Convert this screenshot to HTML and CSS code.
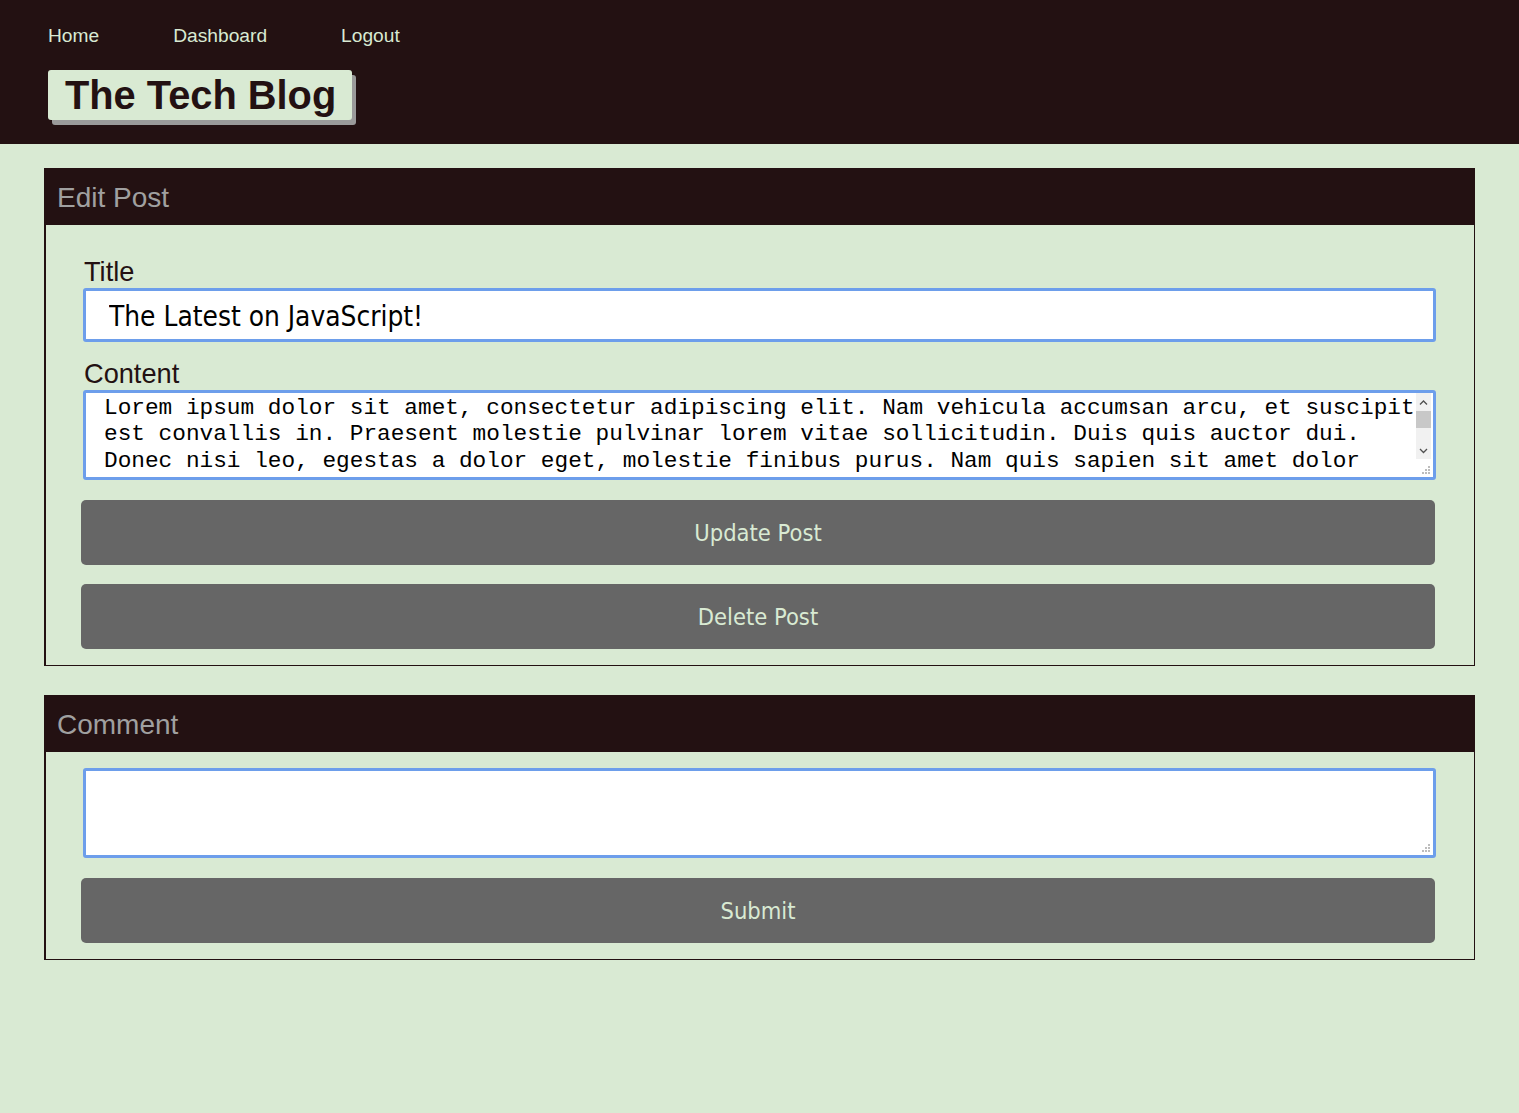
FILE: index.html
```html
<!DOCTYPE html>
<html lang="en">
<head>
<meta charset="utf-8">
<title>The Tech Blog</title>
<link rel="stylesheet" href="styles.css">
</head>
<body>
<header class="site-header">
  <nav class="nav">
    <a class="nav-link" href="#">Home</a>
    <a class="nav-link" href="#">Dashboard</a>
    <a class="nav-link" href="#">Logout</a>
  </nav>
  <h1 class="brand">The Tech Blog</h1>
</header>
<main class="main">
  <section class="card">
    <h2 class="card-title">Edit Post</h2>
    <form class="card-body">
      <label class="field-label" for="title">Title</label>
      <input class="text-input" id="title" type="text" value="The Latest on JavaScript!">
      <label class="field-label" for="content">Content</label>
      <div class="area-wrap">
        <textarea class="text-area content-area" id="content">Lorem ipsum dolor sit amet, consectetur adipiscing elit. Nam vehicula accumsan arcu, et suscipit est convallis in. Praesent molestie pulvinar lorem vitae sollicitudin. Duis quis auctor dui. Donec nisi leo, egestas a dolor eget, molestie finibus purus. Nam quis sapien sit amet dolor tincidunt faucibus. Vestibulum ante ipsum primis in faucibus orci luctus et ultrices posuere cubilia curae; Integer vel tortor nec lorem vestibulum dapibus. Sed eget ligula sit amet nisi tincidunt pretium. Curabitur vitae feugiat neque, in convallis magna. Aliquam erat volutpat. Maecenas vitae nibh id augue fermentum blandit.</textarea>
        <div class="fake-scrollbar" aria-hidden="true">
          <span class="sb-btn">
            <svg width="15" height="15" viewBox="0 0 15 15"><path d="M4 11.5 L7.5 8 L11 11.5" fill="none" stroke="#505050" stroke-width="1.3"/></svg>
          </span>
          <span class="sb-track"><span class="sb-thumb"></span></span>
          <span class="sb-btn">
            <svg width="15" height="15" viewBox="0 0 15 15"><path d="M4 5 L7.5 8.5 L11 5" fill="none" stroke="#505050" stroke-width="1.3"/></svg>
          </span>
        </div>
        <svg class="grip" width="9" height="9" viewBox="0 0 9 9" aria-hidden="true">
          <rect x="7" y="1" width="2" height="2" fill="#bdbdbd"/>
          <rect x="4" y="4" width="2" height="2" fill="#bdbdbd"/>
          <rect x="7" y="4" width="2" height="2" fill="#bdbdbd"/>
          <rect x="1" y="7" width="2" height="2" fill="#bdbdbd"/>
          <rect x="4" y="7" width="2" height="2" fill="#bdbdbd"/>
          <rect x="7" y="7" width="2" height="2" fill="#bdbdbd"/>
        </svg>
      </div>
      <button class="btn" type="button">Update Post</button>
      <button class="btn btn-gap" type="button">Delete Post</button>
    </form>
  </section>
  <section class="card">
    <h2 class="card-title">Comment</h2>
    <form class="card-body card-body-comment">
      <div class="area-wrap">
        <textarea class="text-area comment-area" aria-label="Comment"></textarea>
        <svg class="grip" width="9" height="9" viewBox="0 0 9 9" aria-hidden="true">
          <rect x="7" y="1" width="2" height="2" fill="#bdbdbd"/>
          <rect x="4" y="4" width="2" height="2" fill="#bdbdbd"/>
          <rect x="7" y="4" width="2" height="2" fill="#bdbdbd"/>
          <rect x="1" y="7" width="2" height="2" fill="#bdbdbd"/>
          <rect x="4" y="7" width="2" height="2" fill="#bdbdbd"/>
          <rect x="7" y="7" width="2" height="2" fill="#bdbdbd"/>
        </svg>
      </div>
      <button class="btn" type="button">Submit</button>
    </form>
  </section>
</main>
</body>
</html>
```
FILE: styles.css
```css
html, body {
  margin: 0;
  padding: 0;
}
body {
  background: #d9ead3;
  font-family: "Liberation Sans", Arial, sans-serif;
  color: #231112;
  min-height: 1113px;
}
.site-header {
  background: #231112;
  padding: 25px 0 24px 48px;
}
.nav {
  display: flex;
  gap: 74px;
}
.nav-link {
  color: #d9ead3;
  text-decoration: none;
  font-size: 19.2px;
  line-height: normal;
}
.brand {
  display: inline-block;
  margin: 23px 0 0 0;
  padding: 0 16px 0 17px;
  height: 50px;
  line-height: 50px;
  font-size: 39.8px;
  font-weight: bold;
  background: #d9ead3;
  color: #231112;
  border-radius: 3px;
  box-shadow: 4px 5px 0 #9a9a9a;
}
.main {
  padding: 24px 44px 0 44px;
}
.card {
  border: 1px solid #231112;
  border-left-width: 2px;
  margin-bottom: 29px;
}
.card-title {
  margin: 0;
  background: #231112;
  color: #a0a0a0;
  font-weight: normal;
  font-size: 28px;
  height: 56px;
  line-height: 57px;
  padding: 0 11px;
}
.card-body {
  display: flex;
  flex-direction: column;
  padding: 15px 39px 16px 35px;
}
.card-body-comment {
  padding-top: 16px;
}
.field-label {
  display: block;
  margin: 16px 0 0 3px;
  font-size: 27.2px;
  line-height: 32px;
  color: #231112;
}
.text-input,
.text-area {
  box-sizing: border-box;
  border: 3px solid #6d9eeb;
  border-radius: 3px;
  background: #fff;
  color: #000;
  outline: none;
}
.text-input {
  margin: 0 -1px 0 2px;
  height: 54px;
  padding: 2px 22px 0 23px;
  font-family: "DejaVu Sans Condensed", "DejaVu Sans", sans-serif;
  font-stretch: condensed;
  font-size: 27.8px;
}
.area-wrap {
  position: relative;
  margin: 0 -1px 0 2px;
}
.text-area {
  display: block;
  width: 100%;
  height: 90px;
  resize: none;
  margin: 0;
  padding: 2px 17px 0 18px;
  font-family: "Liberation Mono", "Courier New", monospace;
  font-size: 22.75px;
  line-height: 26.4px;
  overflow: hidden;
}
.fake-scrollbar {
  position: absolute;
  top: 3px;
  right: 5px;
  width: 15px;
  height: 66px;
  display: flex;
  flex-direction: column;
  background: #f1f1f1;
}
.sb-btn {
  display: block;
  height: 15px;
  flex: none;
}
.sb-btn svg {
  display: block;
}
.sb-track {
  flex: 1;
  display: block;
}
.sb-thumb {
  display: block;
  margin-top: 3px;
  height: 17px;
  background: #c8c8c8;
}
.grip {
  position: absolute;
  right: 6px;
  bottom: 6px;
  display: block;
}
.btn {
  margin-top: 20px;
  height: 65px;
  border: none;
  border-radius: 5px;
  background: #666666;
  color: #d9ead3;
  font-family: "DejaVu Sans Condensed", "DejaVu Sans", sans-serif;
  font-stretch: condensed;
  font-size: 23.5px;
  cursor: pointer;
}
.btn-gap {
  margin-top: 19px;
}
```
